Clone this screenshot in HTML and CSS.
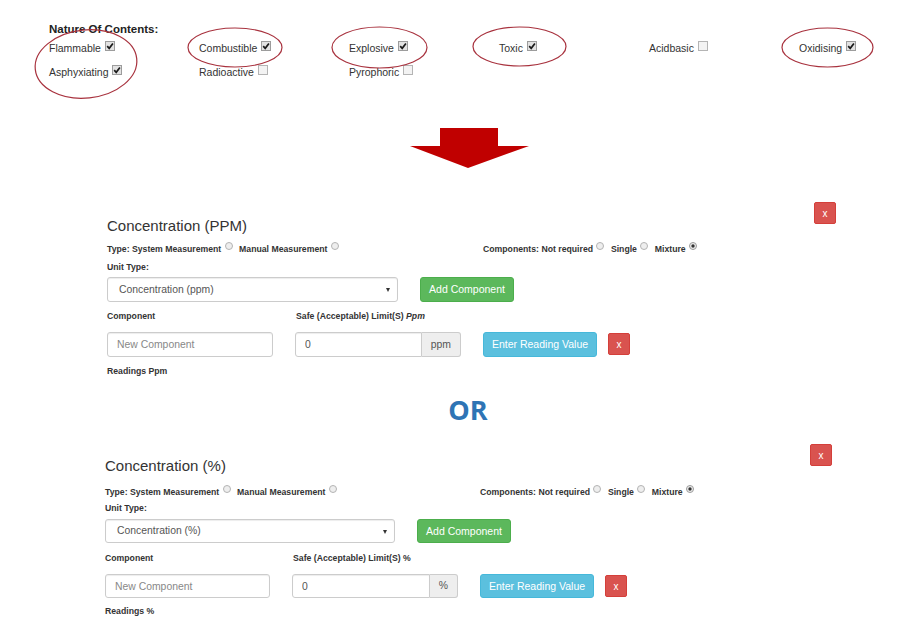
FILE: index.html
```html
<!DOCTYPE html>
<html>
<head>
<meta charset="utf-8">
<title>Nature Of Contents</title>
<link rel="stylesheet" href="styles.css">
</head>
<body>
<div class="nature">
  <div class="nature-title">Nature Of Contents:</div>
  <div class="opts">
    <span class="opt">Flammable <svg class="cb" viewBox="0 0 10 10" width="10" height="10"><rect x=".5" y=".5" width="9" height="9" fill="#e2e2e2" stroke="#9c9c9c"/><path d="M2.2 5.1 L4.2 7.3 L7.9 2.4" fill="none" stroke="#1a1a1a" stroke-width="1.7"/></svg></span>
    <span class="opt">Combustible <svg class="cb" viewBox="0 0 10 10" width="10" height="10"><rect x=".5" y=".5" width="9" height="9" fill="#e2e2e2" stroke="#9c9c9c"/><path d="M2.2 5.1 L4.2 7.3 L7.9 2.4" fill="none" stroke="#1a1a1a" stroke-width="1.7"/></svg></span>
    <span class="opt">Explosive <svg class="cb" viewBox="0 0 10 10" width="10" height="10"><rect x=".5" y=".5" width="9" height="9" fill="#e2e2e2" stroke="#9c9c9c"/><path d="M2.2 5.1 L4.2 7.3 L7.9 2.4" fill="none" stroke="#1a1a1a" stroke-width="1.7"/></svg></span>
    <span class="opt">Toxic <svg class="cb" viewBox="0 0 10 10" width="10" height="10"><rect x=".5" y=".5" width="9" height="9" fill="#e2e2e2" stroke="#9c9c9c"/><path d="M2.2 5.1 L4.2 7.3 L7.9 2.4" fill="none" stroke="#1a1a1a" stroke-width="1.7"/></svg></span>
    <span class="opt">Acidbasic <svg class="cb" viewBox="0 0 10 10" width="10" height="10"><rect x=".5" y=".5" width="9" height="9" fill="#f3f3f3" stroke="#b4b4b4"/></svg></span>
    <span class="opt">Oxidising <svg class="cb" viewBox="0 0 10 10" width="10" height="10"><rect x=".5" y=".5" width="9" height="9" fill="#e2e2e2" stroke="#9c9c9c"/><path d="M2.2 5.1 L4.2 7.3 L7.9 2.4" fill="none" stroke="#1a1a1a" stroke-width="1.7"/></svg></span>
    <span class="opt">Asphyxiating <svg class="cb" viewBox="0 0 10 10" width="10" height="10"><rect x=".5" y=".5" width="9" height="9" fill="#e2e2e2" stroke="#9c9c9c"/><path d="M2.2 5.1 L4.2 7.3 L7.9 2.4" fill="none" stroke="#1a1a1a" stroke-width="1.7"/></svg></span>
    <span class="opt">Radioactive <svg class="cb" viewBox="0 0 10 10" width="10" height="10"><rect x=".5" y=".5" width="9" height="9" fill="#f3f3f3" stroke="#b4b4b4"/></svg></span>
    <span class="opt">Pyrophoric <svg class="cb" viewBox="0 0 10 10" width="10" height="10"><rect x=".5" y=".5" width="9" height="9" fill="#f3f3f3" stroke="#b4b4b4"/></svg></span>
  </div>
  <svg class="marks" width="920" height="110" viewBox="0 0 920 110">
    <g fill="none" stroke="#a8323e" stroke-width="1.2">
      <ellipse cx="86" cy="64" rx="51" ry="34" transform="rotate(-6 86 64)"/>
      <ellipse cx="235" cy="47.5" rx="47" ry="19.5"/>
      <ellipse cx="379.5" cy="47.5" rx="47.5" ry="20.5"/>
      <ellipse cx="519.5" cy="46.5" rx="46.5" ry="19.5"/>
      <ellipse cx="827.5" cy="47.5" rx="45.5" ry="19.5"/>
    </g>
  </svg>
</div>

<div class="arrow-wrap">
  <svg class="arrow" width="120" height="40" viewBox="0 0 120 40"><polygon points="30,0 88,0 88,18 119,18 58,40 0,18 30,18" fill="#c00000"/></svg>
</div>

<div class="panel p1">
  <div class="panel-head">
    <h3 class="panel-title">Concentration (PPM)</h3>
    <button class="btn btn-danger btn-x">x</button>
  </div>
  <div class="type-row">
    <div class="type-left">Type: System Measurement <svg class="rd" width="8" height="8" viewBox="0 0 8 8"><circle cx="4" cy="4" r="3.5" fill="#eeeeee" stroke="#b3b3b3"/></svg> Manual Measurement <svg class="rd" width="8" height="8" viewBox="0 0 8 8"><circle cx="4" cy="4" r="3.5" fill="#eeeeee" stroke="#b3b3b3"/></svg></div>
    <div class="type-right">Components: Not required <svg class="rd" width="8" height="8" viewBox="0 0 8 8"><circle cx="4" cy="4" r="3.5" fill="#eeeeee" stroke="#b3b3b3"/></svg> Single <svg class="rd" width="8" height="8" viewBox="0 0 8 8"><circle cx="4" cy="4" r="3.5" fill="#eeeeee" stroke="#b3b3b3"/></svg> Mixture <svg class="rd" width="8" height="8" viewBox="0 0 8 8"><circle cx="4" cy="4" r="3.5" fill="#eeeeee" stroke="#9a9a9a"/><circle cx="4" cy="4" r="1.7" fill="#333"/></svg></div>
  </div>
  <div class="lbl">Unit Type:</div>
  <div class="unit-row">
    <div class="select">Concentration (ppm)<span class="caret"></span></div>
    <button class="btn btn-success">Add Component</button>
  </div>
  <div class="labels-row">
    <div class="lbl col1">Component</div>
    <div class="lbl">Safe (Acceptable) Limit(S) <i>Ppm</i></div>
  </div>
  <div class="input-row">
    <input class="form-control comp" placeholder="New Component">
    <div class="input-group"><input class="form-control grp-input" value="0"><span class="addon">ppm</span></div>
    <button class="btn btn-info">Enter Reading Value</button>
    <button class="btn btn-danger btn-x btn-x-sm">x</button>
  </div>
  <div class="lbl">Readings Ppm</div>
</div>

<div class="or-wrap"><span class="or">OR</span></div>

<div class="panel p2">
  <div class="panel-head">
    <h3 class="panel-title">Concentration (%)</h3>
    <button class="btn btn-danger btn-x">x</button>
  </div>
  <div class="type-row">
    <div class="type-left">Type: System Measurement <svg class="rd" width="8" height="8" viewBox="0 0 8 8"><circle cx="4" cy="4" r="3.5" fill="#eeeeee" stroke="#b3b3b3"/></svg> Manual Measurement <svg class="rd" width="8" height="8" viewBox="0 0 8 8"><circle cx="4" cy="4" r="3.5" fill="#eeeeee" stroke="#b3b3b3"/></svg></div>
    <div class="type-right">Components: Not required <svg class="rd" width="8" height="8" viewBox="0 0 8 8"><circle cx="4" cy="4" r="3.5" fill="#eeeeee" stroke="#b3b3b3"/></svg> Single <svg class="rd" width="8" height="8" viewBox="0 0 8 8"><circle cx="4" cy="4" r="3.5" fill="#eeeeee" stroke="#b3b3b3"/></svg> Mixture <svg class="rd" width="8" height="8" viewBox="0 0 8 8"><circle cx="4" cy="4" r="3.5" fill="#eeeeee" stroke="#9a9a9a"/><circle cx="4" cy="4" r="1.7" fill="#333"/></svg></div>
  </div>
  <div class="lbl">Unit Type:</div>
  <div class="unit-row">
    <div class="select">Concentration (%)<span class="caret"></span></div>
    <button class="btn btn-success">Add Component</button>
  </div>
  <div class="labels-row">
    <div class="lbl col1">Component</div>
    <div class="lbl">Safe (Acceptable) Limit(S) %</div>
  </div>
  <div class="input-row">
    <input class="form-control comp" placeholder="New Component">
    <div class="input-group"><input class="form-control grp-input" value="0"><span class="addon">%</span></div>
    <button class="btn btn-info">Enter Reading Value</button>
    <button class="btn btn-danger btn-x btn-x-sm">x</button>
  </div>
  <div class="lbl">Readings %</div>
</div>
</body>
</html>
```

FILE: styles.css
```css
* { box-sizing: border-box; }
html, body { margin: 0; padding: 0; background: #fff; }
body {
  font-family: "Liberation Sans", Arial, sans-serif;
  color: #333;
  width: 920px;
  height: 638px;
  overflow: hidden;
}

/* Nature of contents */
.nature {
  position: relative;
  padding: 22px 0 0 49px;
  height: 84px;
}
.nature-title {
  font-size: 11.5px;
  font-weight: bold;
  line-height: 14px;
  color: #222;
}
.opts {
  display: grid;
  grid-template-columns: repeat(6, 150px);
  grid-auto-rows: 24px;
}
.opt {
  font-size: 10.5px;
  line-height: 24px;
  color: #333;
  white-space: nowrap;
}
.cb {
  vertical-align: baseline;
  margin-bottom: 1px;
  margin-left: 1px;
}
.marks {
  position: absolute;
  left: 0;
  top: 0;
  pointer-events: none;
}

/* arrow */
.arrow-wrap {
  margin-top: 44px;
  padding-left: 410px;
  height: 40px;
}
.arrow { display: block; }

/* panels */
.panel {
  margin-left: 107px;
  width: 729px;
  margin-top: 34px;
}
.p2 {
  margin-left: 105px;
  width: 727px;
  margin-top: 19px;
}
.panel-head {
  display: flex;
  justify-content: space-between;
  align-items: flex-start;
  height: 33px;
}
.panel-title {
  margin: 0;
  padding-top: 15px;
  font-size: 15px;
  line-height: 18px;
  font-weight: normal;
  color: #333;
}
.p2 .panel-title { padding-top: 13px; }

.btn {
  font-family: "Liberation Sans", Arial, sans-serif;
  font-size: 10.5px;
  color: #fff;
  border: 1px solid transparent;
  border-radius: 3px;
  height: 25px;
  padding: 0 9px;
  line-height: 23px;
  cursor: pointer;
  white-space: nowrap;
}
.btn-danger { background: #d9534f; border-color: #d43f3a; }
.btn-success { background: #5cb85c; border-color: #4cae4c; width: 94px; padding: 0; }
.btn-info { background: #5bc0de; border-color: #46b8da; width: 114px; padding: 0; }
.btn-x {
  width: 22px;
  height: 22px;
  padding: 0;
  line-height: 19px;
  font-size: 10px;
  border-radius: 2px;
}
.btn-x-sm { margin-top: 1px; }

.type-row {
  display: flex;
  margin-top: 5px;
  font-size: 8.7px;
  font-weight: bold;
  line-height: 18px;
  color: #333;
  white-space: nowrap;
}
.p2 .type-row { margin-top: 6px; }
.type-left { width: 376px; }
.p2 .type-left { width: 375px; }
.rd {
  vertical-align: baseline;
  margin: 0 4px 2px 1px;
}

.lbl {
  font-size: 8.7px;
  font-weight: bold;
  line-height: 18px;
  color: #333;
  white-space: nowrap;
}
.p2 .type-row + .lbl { margin-top: -2px; }
.lbl i { font-weight: bold; font-style: italic; }

.unit-row {
  display: flex;
  gap: 22px;
  margin-top: 1px;
}
.p2 .unit-row { margin-top: 2px; }
.select {
  position: relative;
  width: 291px;
  height: 25px;
  border: 1px solid #ccc;
  border-radius: 3px;
  box-shadow: inset 0 1px 1px rgba(0,0,0,.075);
  font-size: 10.4px;
  line-height: 23px;
  padding-left: 11px;
  color: #555;
}
.p2 .select { width: 290px; height: 24px; line-height: 22px; }
.p2 .btn-success { height: 24px; line-height: 22px; }
.caret {
  position: absolute;
  right: 7px;
  top: 10px;
  width: 0;
  height: 0;
  border-left: 2.5px solid transparent;
  border-right: 2.5px solid transparent;
  border-top: 4px solid #333;
}

.labels-row {
  display: flex;
  margin-top: 5px;
}
.p2 .labels-row { margin-top: 6px; }
.col1 { width: 189px; }
.p2 .col1 { width: 188px; }

.input-row {
  display: flex;
  align-items: flex-start;
  margin-top: 7px;
  margin-bottom: 5px;
}
.p2 .input-row { margin-top: 7px; margin-bottom: 4px; }
.form-control {
  font-family: "Liberation Sans", Arial, sans-serif;
  font-size: 10.4px;
  color: #555;
  height: 25px;
  border: 1px solid #ccc;
  border-radius: 3px;
  box-shadow: inset 0 1px 1px rgba(0,0,0,.075);
  padding: 0 9px;
  outline: none;
  background: #fff;
}
.p2 .form-control, .p2 .addon, .p2 .btn-info { height: 24px; line-height: 22px; }
.form-control::placeholder { color: #888; }
.comp { width: 166px; margin-right: 22px; }
.p2 .comp { width: 165px; }
.input-group {
  display: flex;
  width: 166px;
  margin-right: 22px;
}
.grp-input {
  flex: 1;
  min-width: 0;
  border-radius: 3px 0 0 3px;
}
.addon {
  height: 25px;
  padding: 0 9px;
  background: #eee;
  border: 1px solid #ccc;
  border-left: none;
  border-radius: 0 3px 3px 0;
  font-size: 10.4px;
  line-height: 23px;
  color: #555;
}
.btn-info { margin-right: 11px; }

.or-wrap {
  margin-top: 15px;
  margin-left: 107px;
  width: 722px;
  text-align: center;
  height: 30px;
}
.or {
  font-family: "Open Sans", "Liberation Sans", sans-serif;
  font-weight: bold;
  font-size: 27px;
  line-height: 30px;
  color: #2e74b5;
}
```
